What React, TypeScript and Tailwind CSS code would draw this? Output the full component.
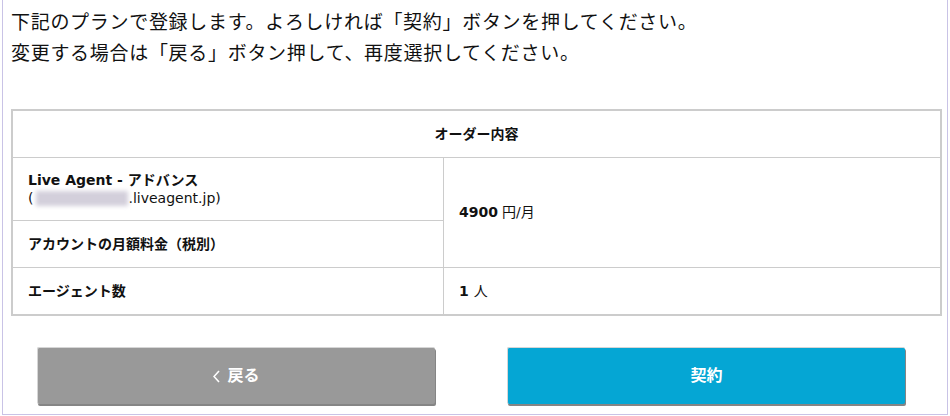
const font = "font-['Noto_Sans_CJK_JP','Noto_Sans',sans-serif]";
const tableFont = "font-['DejaVu_Sans','Noto_Sans_CJK_JP',sans-serif]";

function BackButton() {
  return (
    <button
      type="button"
      className={`${tableFont} flex h-[57px] w-[398px] items-center justify-center gap-[7px] rounded-[2px] border-t border-l border-[#d6d6d6] bg-[#999999] text-[16px] font-bold text-white shadow-[1px_2px_0_#858585]`}
    >
      <svg width="7" height="13" viewBox="0 0 7 13" fill="none">
        <polyline points="6,1 1,6.5 6,12" stroke="white" strokeWidth="1.6" />
      </svg>
      戻る
    </button>
  );
}

function SubmitButton() {
  return (
    <button
      type="button"
      className={`${tableFont} flex h-[57px] w-[398px] items-center justify-center rounded-[2px] border-t border-l border-[#d6d6d6] bg-[#05a6d4] text-[16px] font-bold text-white shadow-[1px_2px_0_#858585]`}
    >
      契約
    </button>
  );
}

export default function App() {
  return (
    <div className={`${font} bg-white text-[#111]`}>
      <div className="ml-[2px] h-[415px] w-[946px] border-r border-b border-l border-[#c9c3e6] px-[8px]">
        {/* 説明文 */}
        <div className="pt-[5px] text-[19px] leading-[31px] tracking-[0.7px]">
          <p>下記のプランで登録します。よろしければ「契約」ボタンを押してください。</p>
          <p>変更する場合は「戻る」ボタン押して、再度選択してください。</p>
        </div>

        {/* オーダー内容 */}
        <div className={`${tableFont} mt-[42px] w-[931px] border-2 border-[#cccccc] text-[14px]`}>
          <div className="flex h-[47px] items-center justify-center border-b border-[#cccccc] font-bold">
            オーダー内容
          </div>

          <div className="grid grid-cols-[431px_1fr] border-b border-[#cccccc]">
            <div className="border-r border-[#cccccc]">
              <div className="flex h-[63px] flex-col justify-center border-b border-[#cccccc] px-[15px] leading-[18px]">
                <span className="font-bold">Live Agent - アドバンス</span>
                <span className="flex items-center">
                  (
                  <span className="ml-[3px] inline-block h-[15px] w-[92px] bg-[#d3cfdb] blur-[2px]" />
                  .liveagent.jp)
                </span>
              </div>
              <div className="flex h-[46px] items-center px-[15px] font-bold">
                アカウントの月額料金（税別）
              </div>
            </div>
            <div className="flex items-center px-[15px]">
              <span className="font-bold">4900</span>
              <span className="ml-[4px]">円/月</span>
            </div>
          </div>

          <div className="grid h-[46px] grid-cols-[431px_1fr]">
            <div className="flex items-center border-r border-[#cccccc] px-[15px] font-bold">
              エージェント数
            </div>
            <div className="flex items-center px-[15px]">
              <span className="font-bold">1</span>
              <span className="ml-[5px]">人</span>
            </div>
          </div>
        </div>

        {/* ボタン */}
        <div className="mt-[31px] flex gap-[72px] pl-[26px]">
          <BackButton />
          <SubmitButton />
        </div>
      </div>
    </div>
  );
}
